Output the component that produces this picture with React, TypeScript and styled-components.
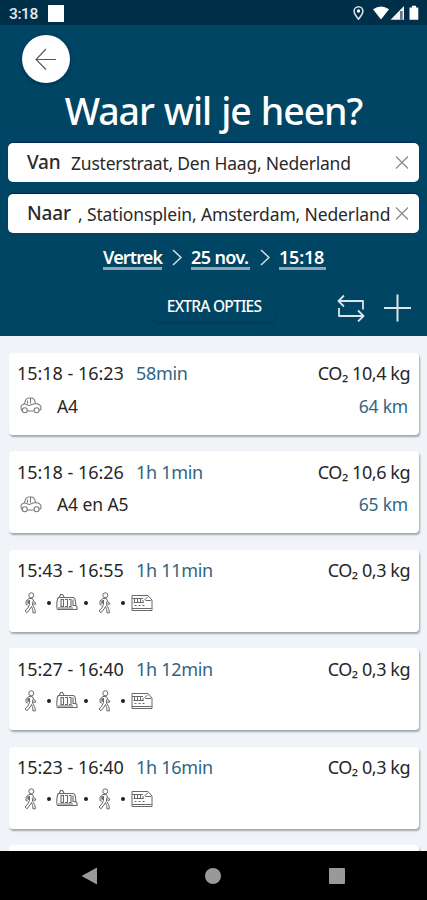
import React from 'react';
import styled, { createGlobalStyle } from 'styled-components';

const GlobalStyle = createGlobalStyle`
  * { box-sizing: border-box; }
  body { margin: 0; background: #f0f4f9; }
  svg { display: block; flex: none; }
`;

const Screen = styled.main`
  width: 427px;
  height: 900px;
  overflow: hidden;
  display: flex;
  flex-direction: column;
  background: #f0f4f9;
  font-family: 'Noto Sans', 'Open Sans', sans-serif;
  color: #262626;
`;

const StatusBar = styled.div`
  height: 25px;
  flex: none;
  display: flex;
  align-items: center;
  padding: 1px 7px 0 9px;
  background: #003049;
  color: #e6eaee;
`;

const Clock = styled.span`
  width: 39px;
  font: 500 15.5px/24px Roboto, sans-serif;
  letter-spacing: -0.4px;
  padding-top: 1px;
`;

const AppSquare = styled.span`
  width: 16px;
  height: 17px;
  background: #fff;
  margin-right: auto;
`;

const Header = styled.header`
  height: 311px;
  flex: none;
  padding: 10px 8px 0;
  background: #004563;
  color: #fff;
`;

const BackButton = styled.button`
  width: 48px;
  height: 48px;
  margin-left: 14px;
  padding: 0;
  border: 0;
  border-radius: 50%;
  background: #fff;
  display: flex;
  align-items: center;
  justify-content: center;
  box-shadow: 0 1px 4px rgba(0, 20, 60, 0.5);
`;

const Title = styled.h1`
  height: 52px;
  margin: 2px 0 6px;
  font-size: 37.5px;
  line-height: 52px;
  font-weight: 500;
  letter-spacing: -1.1px;
  word-spacing: 1.5px;
  text-align: center;
  white-space: nowrap;
`;

const Field = styled.div`
  height: 39px;
  margin-bottom: 12px;
  padding: 0 10px 0 19px;
  border-radius: 5px;
  background: #fff;
  box-shadow: 0 -1px 1px #00265a;
  display: flex;
  align-items: center;
  color: #2a2a2a;
  white-space: nowrap;
`;

const FieldLabel = styled.span<{ $width: number }>`
  width: ${p => p.$width}px;
  flex: none;
  font-size: 19px;
  font-weight: 500;
  line-height: 26px;
  letter-spacing: -0.2px;
  padding-bottom: 2px;
`;

const FieldValue = styled.span<{ $spacing: number }>`
  flex: 1;
  font-size: 17.5px;
  line-height: 26px;
  letter-spacing: ${p => p.$spacing}px;
`;

const TimeRow = styled.div`
  height: 25px;
  display: flex;
  align-items: center;
  padding-left: 95px;
  margin-top: 1px;
`;

const TimeLink = styled.span<{ $width: number; $spacing: number }>`
  width: ${p => p.$width}px;
  height: 25px;
  font-size: 18px;
  line-height: 24px;
  font-weight: 600;
  letter-spacing: ${p => p.$spacing}px;
  white-space: nowrap;
  border-bottom: 3px solid #8fa6b6;
`;

const Separator = styled.span`
  width: 29px;
  display: flex;
  justify-content: center;
`;

const OptionsRow = styled.div`
  display: flex;
  align-items: center;
  height: 36px;
  margin-top: 20px;
  padding-left: 144px;
`;

const ExtraButton = styled.button`
  width: 124px;
  height: 32px;
  margin-bottom: 5px;
  padding: 0;
  border: 0;
  border-radius: 8px;
  background: #004563;
  box-shadow: 0 2px 3px -1px rgba(0, 35, 55, 0.35);
  color: #fff;
  font: 500 15.5px/32px 'Noto Sans', sans-serif;
  letter-spacing: -0.78px;
  white-space: nowrap;
`;

const IconGroup = styled.div`
  display: flex;
  align-items: center;
  gap: 19px;
  margin-left: 61px;
`;

const Results = styled.section`
  flex: 1;
  min-height: 0;
  overflow: hidden;
  display: flex;
  flex-direction: column;
  gap: 16.4px;
  padding: 17px 8px 0 9px;
`;

const Card = styled.article`
  height: 82px;
  flex: none;
  border-radius: 4px;
  background: #fff;
  padding: 7.4px 9px 0 8px;
  box-shadow: 1px 2px 2px rgba(50, 60, 65, 0.42);
`;

const CardTop = styled.div`
  display: flex;
  height: 26px;
  line-height: 26px;
  font-size: 18px;
  white-space: nowrap;
`;

const Times = styled.span`
  width: 119px;
  letter-spacing: -0.03px;
`;

const Duration = styled.span`
  flex: 1;
  color: #336582;
  letter-spacing: -0.3px;
`;

const Co2 = styled.span`
  font-size: 18px;
  letter-spacing: -0.45px;
`;

const CardBottom = styled.div`
  display: flex;
  align-items: center;
  height: 26px;
  margin-top: 7px;
  padding: 0 2px 0 3px;
  font-size: 17.5px;
  white-space: nowrap;
`;

const RouteName = styled.span`
  flex: 1;
  margin-left: 15px;
  padding-bottom: 1px;
  letter-spacing: -0.1px;
`;

const Distance = styled.span`
  color: #336582;
  padding-bottom: 1px;
  letter-spacing: -0.2px;
`;

const Modes = styled.div`
  display: flex;
  align-items: center;
  padding-bottom: 1px;
`;

const ModeSlot = styled.span<{ $width: number }>`
  width: ${p => p.$width}px;
  display: flex;
  justify-content: center;
`;

const Dot = styled.span<{ $after: number }>`
  width: 4px;
  height: 4px;
  border-radius: 50%;
  background: #222;
  margin-right: ${p => p.$after}px;
`;

const NavBar = styled.nav`
  height: 49px;
  flex: none;
  display: flex;
  align-items: center;
  justify-content: space-between;
  padding: 0 82px 0 81px;
  background: #000;
`;

const StatusIcons = () => (
  <svg width="68" height="20" viewBox="0 0 68 20" fill="#fff">
    <path d="M6.5 3.7a4.4 4.4 0 0 0-4.4 4.4c0 3.1 4.4 8 4.4 8s4.4-4.9 4.4-8a4.4 4.4 0 0 0-4.4-4.4Z" fill="none" stroke="#d8dfe5" strokeWidth="1.6" />
    <circle cx="6.5" cy="8" r="1.7" />
    <path d="M21 6.2q8-5.3 16 0L29 16.6Z" />
    <path d="M52 3v13.8H38.5Z" opacity=".95" />
    <path d="M48 8h2.7v8.8H48Z" fill="#65788a" />
    <path d="M60 2.8h4v1.8h2.3v12.2h-8.8V4.6H60Z" />
  </svg>
);

const BackArrow = () => (
  <svg width="24" height="24" viewBox="0 0 24 24" fill="none" stroke="#555" strokeWidth="1.1">
    <path d="M22 12.5H2M12 2 2 12.5l10 10" />
  </svg>
);

const ClearIcon = () => (
  <svg width="14" height="14" viewBox="0 0 14 14" fill="none" stroke="#858585" strokeWidth="1.1">
    <path d="m1 .5 12 12M13 .5l-12 12" />
  </svg>
);

const Chevron = () => (
  <svg width="10" height="17" viewBox="0 0 10 17" fill="none" stroke="#d8e0e7" strokeWidth="1.5">
    <path d="m1 1 8 7.500-8 7.500" />
  </svg>
);

const SwapIcon = () => (
  <svg width="28" height="28" viewBox="0 0 28 28" fill="none" stroke="#dde4ea" strokeWidth="1.8" strokeLinejoin="round">
    <path d="M7 1.500 1.500 7 7 12.500M2 7h24v8.500M21 16.500l5.500 5.500-5.500 5.500M26 22H2V14" />
  </svg>
);

const PlusIcon = () => (
  <svg width="27" height="28" viewBox="0 0 27 28" fill="none" stroke="#dde4ea" strokeWidth="2">
    <path d="M13.500 .5v27M0 14h27" />
  </svg>
);

const CarIcon = () => (
  <svg width="22" height="18" viewBox="0 0 22 18" fill="none" stroke="#7a7a7a" strokeWidth="1.1">
    <path d="M2.300 13.500C.5 12.500.5 8 2.800 7.500l1.800-.7C5 3.500 6 1 9 1h2.500c2.500 0 3.500 2.500 4 5.500 4 .2 6 2.500 5.500 5.500l-1.500 1.500M7.500 14h6.200M5 7c1.800 0 2.500 1.500 4 1.500S12 7 15.500 6.500M10.500 1.500v5M7.500 3.500v3" />
    <circle cx="4.800" cy="13.300" r="2.500" />
    <circle cx="16.600" cy="13.300" r="2.500" />
  </svg>
);

const WalkIcon = () => (
  <svg width="13" height="22" viewBox="0 0 13 22" fill="none" stroke="#686868" strokeWidth="1">
    <circle cx="7.300" cy="3.300" r="2.500" />
    <path d="M5 6.500 2 9v3.500l1.800.5M5 6.500l3.500.2L10 10l1.800 1-.5 1.500-2.500-.8M5.500 8v4.500l-1.700 3.500L1 19l2 1.800 3-3.800 1.500-2.500 1.200 3 .3 3.500 2.500-.3-.8-4-2.200-3.700.3-3.500" />
    <path d="M4.200 8.300v3.400" strokeWidth="1.700" />
  </svg>
);

const TramIcon = () => (
  <svg width="22" height="20" viewBox="0 0 22 20" fill="none" stroke="#686868" strokeWidth="1.1">
    <path d="M2.500 4.500h14.500c2 0 2.500 1.500 2.800 8l1.200 1.500v2.500H1.500C.5 16 .5 6 2.500 4.500ZM3.500 4l1-2.500h2L8 4M5 6.500h2.500v7H5ZM9 6.500h2.500v7H9M13 6.500h2v7h-2M17 6.500v6h2.500M2 15h15" />
  </svg>
);

const TrainIcon = () => (
  <svg width="22" height="18" viewBox="0 0 22 18" fill="none" stroke="#686868" strokeWidth="1">
    <path d="M1 1.500h16l4 4.500v10.500H1ZM1 4.500h11M17 2.500l-3.500 3.500M14.500 6.500H20M3.500 5v4M6.500 5v4M9.500 5v4M12 6v3M2.500 8.500h10M3.500 11.500h2M7.500 11.500h2M11.500 11.500h2M1 14.500h19.500" />
  </svg>
);

const BackNav = () => (
  <svg width="16" height="18" viewBox="0 0 16 18"><path d="M.5 9 16 .5v17Z" fill="#999" /></svg>
);
const HomeNav = () => (
  <svg width="16" height="16" viewBox="0 0 16 16"><circle cx="8" cy="8" r="8" fill="#999" /></svg>
);
const RecentNav = () => (
  <svg width="16" height="16" viewBox="0 0 16 16"><rect width="16" height="16" rx="1" fill="#999" /></svg>
);

type Trip = { times: string; duration: string; co2: string; route?: string; distance?: string };

const trips: Trip[] = [
  { times: '15:18 - 16:23', duration: '58min', co2: '10,4', route: 'A4', distance: '64 km' },
  { times: '15:18 - 16:26', duration: '1h 1min', co2: '10,6', route: 'A4 en A5', distance: '65 km' },
  { times: '15:43 - 16:55', duration: '1h 11min', co2: '0,3' },
  { times: '15:27 - 16:40', duration: '1h 12min', co2: '0,3' },
  { times: '15:23 - 16:40', duration: '1h 16min', co2: '0,3' },
];

const TripCard = ({ trip }: { trip: Trip }) => (
  <Card>
    <CardTop>
      <Times>{trip.times}</Times>
      <Duration>{trip.duration}</Duration>
      <Co2>CO₂ {trip.co2} kg</Co2>
    </CardTop>
    <CardBottom>
      {trip.route ? (
        <>
          <CarIcon />
          <RouteName>{trip.route}</RouteName>
          <Distance>{trip.distance}</Distance>
        </>
      ) : (
        <Modes>
          <ModeSlot $width={21}><WalkIcon /></ModeSlot>
          <ModeSlot $width={6} />
          <Dot $after={5} />
          <TramIcon />
          <ModeSlot $width={6} />
          <Dot $after={6} />
          <ModeSlot $width={21}><WalkIcon /></ModeSlot>
          <ModeSlot $width={6} />
          <Dot $after={6} />
          <TrainIcon />
        </Modes>
      )}
    </CardBottom>
  </Card>
);

export default function App() {
  return (
    <>
      <GlobalStyle />
      <Screen>
        <StatusBar>
          <Clock>3:18</Clock>
          <AppSquare />
          <StatusIcons />
        </StatusBar>
        <Header>
          <BackButton aria-label="Terug"><BackArrow /></BackButton>
          <Title>Waar wil je heen?</Title>
          <Field>
            <FieldLabel $width={44}>Van</FieldLabel>
            <FieldValue $spacing={-0.22}>Zusterstraat, Den Haag, Nederland</FieldValue>
            <ClearIcon />
          </Field>
          <Field>
            <FieldLabel $width={51}>Naar</FieldLabel>
            <FieldValue $spacing={-0.14}>, Stationsplein, Amsterdam, Nederland</FieldValue>
            <ClearIcon />
          </Field>
          <TimeRow>
            <TimeLink $width={59} $spacing={-0.85}>Vertrek</TimeLink>
            <Separator><Chevron /></Separator>
            <TimeLink $width={59} $spacing={-0.6}>25 nov.</TimeLink>
            <Separator><Chevron /></Separator>
            <TimeLink $width={47} $spacing={-0.2}>15:18</TimeLink>
          </TimeRow>
          <OptionsRow>
            <ExtraButton>EXTRA OPTIES</ExtraButton>
            <IconGroup>
              <SwapIcon />
              <PlusIcon />
            </IconGroup>
          </OptionsRow>
        </Header>
        <Results>
          {trips.map(trip => <TripCard key={trip.times} trip={trip} />)}
          <Card />
        </Results>
        <NavBar>
          <BackNav />
          <HomeNav />
          <RecentNav />
        </NavBar>
      </Screen>
    </>
  );
}
